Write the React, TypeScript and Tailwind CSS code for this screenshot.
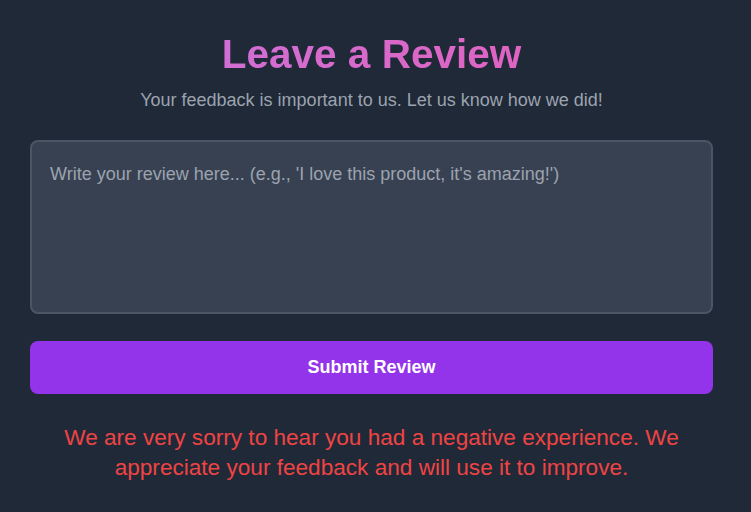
import React, { useState } from 'react';

const App: React.FC = () => {
  const [review, setReview] = useState('');

  return (
    <div className="min-h-screen bg-[#1f2937] font-['Liberation_Sans',Arial,sans-serif]">
      <div className="pl-[30px] pr-[38px] pt-[30px] pb-8">
        {/* Header */}
        <h1 className="text-center text-[40.5px] leading-[48px] font-bold bg-gradient-to-r from-[#c874de] to-[#e85bb7] bg-clip-text text-transparent">
          Leave a Review
        </h1>
        <p className="mt-[10px] text-center text-[18px] leading-6 text-[#9ca3af]">
          Your feedback is important to us. Let us know how we did!
        </p>

        {/* Form */}
        <textarea
          value={review}
          onChange={(e) => setReview(e.target.value)}
          placeholder="Write your review here... (e.g., 'I love this product, it's amazing!')"
          className="mt-[28px] block w-full h-[174px] resize-none rounded-lg border-2 border-[#4b5563] bg-[#374151] px-[18px] py-[18px] text-[18px] leading-[28px] text-gray-100 placeholder:text-[#9ca3af] outline-none"
        />
        <button className="mt-[27px] w-full h-[53px] rounded-lg bg-[#9333ea] text-[18px] font-bold text-white">
          Submit Review
        </button>

        {/* Result */}
        <p className="mt-[29px] text-center text-[22.6px] leading-[30px] text-[#ef4444]">
          We are very sorry to hear you had a negative experience. We appreciate your feedback and will use it to improve.
        </p>
      </div>
    </div>
  );
};

export default App;
